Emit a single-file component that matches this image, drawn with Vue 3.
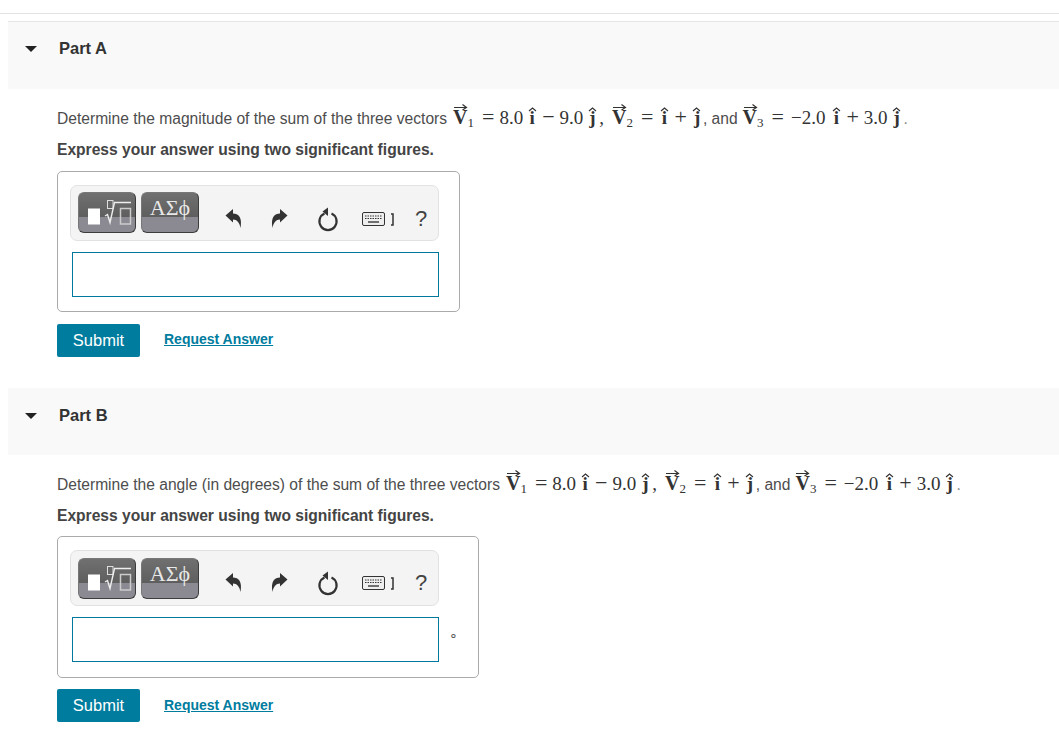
<script setup>
const eq = [
  { k: "vec", v: "V", sub: "1" },
  { k: "eq", v: "=" },
  { k: "num", v: "8.0" },
  { k: "hat", v: "i" },
  { k: "minus", v: "−" },
  { k: "num", v: "9.0" },
  { k: "hat", v: "j" },
  { k: "comma", v: "," },
  { k: "vec", v: "V", sub: "2" },
  { k: "eq", v: "=" },
  { k: "hat", v: "i" },
  { k: "plus", v: "+" },
  { k: "hat", v: "j" },
  { k: "txt", v: ", and" },
  { k: "vec", v: "V", sub: "3" },
  { k: "eq", v: "=" },
  { k: "num neg", v: "−2.0" },
  { k: "hat", v: "i" },
  { k: "plus", v: "+" },
  { k: "num", v: "3.0" },
  { k: "hat", v: "j" },
  { k: "dot", v: "." },
];

const parts = [
  {
    title: "Part A",
    lead: "Determine the magnitude of the sum of the three vectors",
    wide: false,
  },
  {
    title: "Part B",
    lead: "Determine the angle (in degrees) of the sum of the three vectors",
    wide: true,
  },
];
</script>

<template>
  <div class="page">
    <div class="topline"></div>
    <section v-for="part in parts" :key="part.title" class="part">
      <header class="part-head">
        <span class="caret"></span>
        <h2>{{ part.title }}</h2>
      </header>
      <div class="part-body">
        <p class="question">
          <span>{{ part.lead }}</span>
          <span class="math">
            <template v-for="(item, i) in eq" :key="i">
              <span v-if="item.k === 'vec'" class="vec">
                <b>{{ item.v }}</b>
                <svg class="arrow" width="15" height="8" viewBox="0 0 15 8">
                  <path d="M1 4.5H13M9.5 1.5L13.5 4.5L9.5 7" fill="none" stroke="#333" stroke-width="1.2" />
                </svg>
                <sub>{{ item.sub }}</sub>
              </span>
              <span v-else-if="item.k === 'hat'" class="hat">
                <b>{{ item.v }}</b>
                <svg class="hat-mark" width="9" height="5" viewBox="0 0 9 5">
                  <path d="M1 4L4.5 1L8 4" fill="none" stroke="#333" stroke-width="1.2" />
                </svg>
              </span>
              <span v-else :class="item.k">{{ item.v }}</span>
            </template>
          </span>
        </p>
        <p class="hint">Express your answer using two significant figures.</p>

        <div class="answer-box" :class="{ wide: part.wide }">
          <div class="editor">
            <div class="toolbar">
              <button class="tool">
                <svg width="57" height="40" viewBox="0 0 57 40">
                  <rect x="9" y="15.5" width="12" height="16" fill="#fff" />
                  <rect x="28.5" y="7.5" width="5.5" height="8" fill="none" stroke="#ddd" />
                  <path d="M26 23L28.5 21.5L31 29.5L35.5 9.5H52" fill="none" stroke="#eee" stroke-width="1.4" />
                  <rect x="41.5" y="15.5" width="10" height="15.5" fill="none" stroke="#ccc" stroke-width="1.5" />
                </svg>
              </button>
              <button class="tool greek">ΑΣϕ</button>
              <div class="actions">
                <svg class="ico" width="20" height="24" viewBox="0 0 20 24">
                  <path d="M1.5 8.5L9 2V6.5C14.5 6.5 18.5 10.5 16.5 21C15.5 15.5 13 12.5 9 12.5V15.5Z" fill="#333" />
                </svg>
                <svg class="ico redo" width="20" height="24" viewBox="0 0 20 24">
                  <path d="M18.5 8.5L11 2V6.5C5.5 6.5 1.5 10.5 3.5 21C4.5 15.5 7 12.5 11 12.5V15.5Z" fill="#333" />
                </svg>
                <svg class="ico reset" width="22" height="26" viewBox="0 0 22 26">
                  <path d="M7.5 7.6A8.6 8.6 0 1 0 14.5 7.6" fill="none" stroke="#333" stroke-width="2.2" />
                  <path d="M11 1.5L11 10L5.5 5.5Z" fill="#333" />
                </svg>
                <svg class="ico keys" width="34" height="16" viewBox="0 0 34 16">
                  <rect x="0.5" y="1.5" width="22" height="13" rx="1.5" fill="#eee" stroke="#333" />
                  <path d="M3 5H20M3 7.5H20" stroke="#333" stroke-dasharray="1.5 1" />
                  <path d="M6 11H17" stroke="#444" stroke-width="1.5" />
                  <path d="M29 3H31V14H29" fill="none" stroke="#333" stroke-width="1.5" />
                </svg>
                <span class="help">?</span>
              </div>
            </div>
            <div class="input-row">
              <div class="answer-input"></div>
              <span v-if="part.wide" class="unit">∘</span>
            </div>
          </div>
        </div>

        <div class="submit-row" :class="{ wide: part.wide }">
          <button class="submit">Submit</button>
          <a class="request">Request Answer</a>
        </div>
      </div>
    </section>
  </div>
</template>

<style>
html,
body {
  background: #fff;
}
</style>

<style scoped>
.page {
  height: 735px;
  overflow: hidden;
  padding-top: 13px;
  box-sizing: border-box;
  font-family: "Liberation Sans", Arial, sans-serif;
  color: #4d4d4d;
}
.topline {
  height: 1px;
  background: #e2e2e2;
}
.part {
  margin-left: 8px;
}
.part:first-of-type {
  margin-top: 7px;
  border-top: 1px solid #e6e6e6;
}
.part-head {
  height: 67px;
  background: #f9f9f9;
  display: flex;
  align-items: flex-start;
  padding-top: 17px;
  box-sizing: border-box;
}
.part:first-of-type .part-head {
  padding-top: 16px;
}
.caret {
  width: 0;
  height: 0;
  margin: 8px 0 0 17px;
  border-left: 6.5px solid transparent;
  border-right: 6.5px solid transparent;
  border-top: 6.5px solid #222;
}
h2 {
  margin: 0 0 0 22px;
  font-size: 16.5px;
  line-height: 20px;
  font-weight: 700;
  color: #333;
}
.part-body {
  padding: 16px 0 0 49px;
  height: 283px;
  box-sizing: border-box;
}
.part:first-of-type .part-body {
  height: 299px;
}
.question {
  margin: 0;
  display: flex;
  align-items: baseline;
  height: 26px;
  font-size: 15.6px;
  line-height: 24px;
  white-space: nowrap;
}
.math {
  display: inline-flex;
  align-items: baseline;
  margin-left: 6px;
  font-family: "Liberation Serif", serif;
  font-size: 19px;
  line-height: 24px;
  color: #333;
}
.vec {
  position: relative;
  display: inline-flex;
  align-items: baseline;
  margin-right: 8px;
}
.vec b {
  font-size: 20px;
}
.vec sub {
  font-size: 13px;
  line-height: 1;
  position: relative;
  top: 3px;
}
.arrow {
  position: absolute;
  left: 0;
  top: -2px;
}
.eq,
.minus,
.plus {
  font-size: 22px;
  line-height: 1;
  margin-right: 5px;
}
.num {
  margin-right: 6px;
}
.neg {
  margin: 0 8px 0 2px;
}
.hat {
  position: relative;
  display: inline-block;
  width: 6px;
  margin-right: 7px;
  text-align: center;
}
.eq + .hat {
  margin-left: 3px;
}
.plus + .hat {
  margin-left: 2px;
}
.hat-mark {
  position: absolute;
  left: -1.5px;
  top: 1px;
}
.comma {
  margin: 0 8px 0 -3px;
}
.txt {
  font-family: "Liberation Sans", Arial, sans-serif;
  font-size: 15.6px;
  color: #4d4d4d;
  margin: 0 5px 0 -4px;
}
.dot {
  font-family: "Liberation Sans", Arial, sans-serif;
  font-size: 15.6px;
  color: #888;
  margin-left: -3px;
}
.hint {
  margin: 0;
  padding-top: 9px;
  font-size: 15.6px;
  line-height: 20px;
  font-weight: 700;
  color: #444;
}
.answer-box {
  width: 403px;
  height: 141px;
  margin-top: 11px;
  box-sizing: border-box;
  border: 1px solid #aaa;
  border-radius: 5px;
  padding: 13px 0 0 12px;
}
.answer-box.wide {
  width: 422px;
  height: 142px;
  margin-top: 10px;
}
.editor {
  width: 369px;
}
.answer-box.wide .editor {
  width: 400px;
}
.toolbar {
  width: 369px;
  height: 56px;
  display: flex;
  align-items: flex-start;
  box-sizing: border-box;
  padding: 6px 0 0 7px;
  gap: 5px;
  background: #f4f4f4;
  border: 1px solid #e2e2e2;
  border-radius: 7px;
}
.wide .toolbar {
  padding-top: 7px;
}
.wide .actions {
  padding-top: 5px;
  height: 45px;
}
.tool {
  width: 58px;
  height: 41px;
  padding: 0;
  border: 1px solid #555;
  border-color: #777 #3c3c3c #3c3c3c #777;
  border-radius: 6px;
  background: linear-gradient(#707070 0, #5e5e5e 62%, #8b8a92 62%, #8b8a92 100%);
  color: #e8e8e8;
}
.tool svg {
  display: block;
}
.greek {
  font-family: "Liberation Serif", serif;
  font-size: 22px;
  line-height: 30px;
  padding-bottom: 9px;
}
.actions {
  display: flex;
  align-items: center;
  height: 47px;
  margin-left: 20px;
  padding-top: 6px;
  box-sizing: border-box;
}
.ico {
  display: block;
}
.redo {
  margin-left: 25px;
}
.reset {
  margin-left: 28px;
}
.keys {
  margin-left: 23px;
}
.help {
  margin-left: 19px;
  font-size: 22px;
  line-height: 24px;
  color: #444;
}
.input-row {
  display: flex;
  align-items: center;
  margin-top: 11px;
}
.answer-input {
  width: 367px;
  height: 45px;
  margin-left: 2px;
  flex: none;
  box-sizing: border-box;
  border: 1px solid #00789e;
  background: #fff;
}
.unit {
  margin: 0 0 10px 10px;
  font-size: 14px;
  color: #555;
}
.submit-row {
  display: flex;
  align-items: center;
  margin-top: 12px;
}
.submit-row.wide {
  margin-top: 11px;
}
.submit-row.wide .request {
  margin-bottom: 2px;
}
.submit {
  width: 83px;
  height: 33px;
  padding: 0;
  border: 0;
  border-radius: 2px;
  background: #007c9e;
  color: #fff;
  font-family: "Liberation Sans", Arial, sans-serif;
  font-size: 16.5px;
}
.request {
  margin: 0 0 4px 24px;
  color: #007c9e;
  font-size: 14px;
  font-weight: 700;
  text-decoration: underline;
}
</style>
